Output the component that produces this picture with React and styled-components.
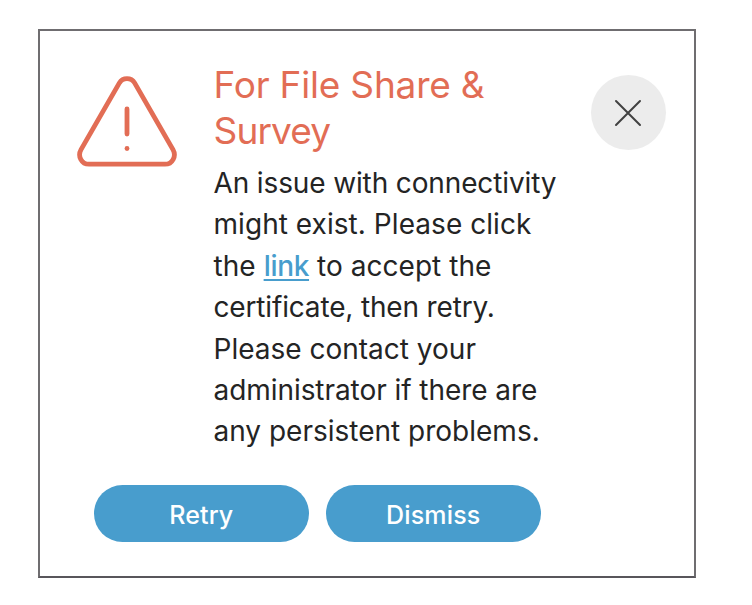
import React from 'react';
import styled, { createGlobalStyle } from 'styled-components';

const GlobalStyle = createGlobalStyle`
  body {
    margin: 0;
    background: #fff;
    font-family: Inter, 'Liberation Sans', sans-serif;
  }
`;

const Dialog = styled.section`
  box-sizing: border-box;
  width: 658px;
  height: 549px;
  margin: 29px 0 0 38px;
  padding: 31px 29px 0 37px;
  border: 2px solid #6f6d70;
  border-bottom-color: #58565b;
  background: #fff;
`;

const Content = styled.div`
  display: flex;
  align-items: flex-start;
`;

const WarningIcon = styled.svg`
  flex: none;
  width: 100px;
  height: 92px;
  margin-top: 13.5px;
  fill: none;
  stroke: #e26d55;
  stroke-width: 4.8;
  stroke-linecap: round;
`;

const Message = styled.div`
  flex: none;
  width: 377px;
  margin-left: 36.5px;
`;

const Title = styled.h1`
  margin: 0;
  color: #e26d55;
  font-size: 37px;
  font-weight: 400;
  line-height: 46px;
`;

const Text = styled.p`
  margin: 9px 0 0;
  color: #242424;
  font-size: 28px;
  line-height: 41.4px;
`;

const Line = styled.span`
  display: block;
  white-space: nowrap;
  letter-spacing: ${({ $spacing }) => $spacing || 0}px;
`;

const Link = styled.a`
  color: #489dcd;
  font-weight: 500;
  letter-spacing: -0.3px;
  text-decoration: underline;
  text-decoration-thickness: 2px;
  text-underline-offset: 3px;
`;

const CloseButton = styled.button`
  display: flex;
  flex: none;
  align-items: center;
  justify-content: center;
  width: 75px;
  height: 75px;
  margin-top: 13px;
  padding: 0;
  border: 0;
  border-radius: 50%;
  background: #ececec;
`;

const CloseIcon = styled.svg`
  width: 28px;
  height: 28px;
  fill: none;
  stroke: #414141;
  stroke-width: 2;
  stroke-linecap: round;
`;

const Actions = styled.div`
  display: flex;
  gap: 16.5px;
  margin: 32.4px 0 0 16.5px;
`;

const Button = styled.button`
  box-sizing: border-box;
  width: 215.5px;
  height: 57px;
  padding: 2px 0 0;
  border: 0;
  border-radius: 29px;
  background: #489dcd;
  color: #fff;
  font: 500 25px Inter, 'Liberation Sans', sans-serif;
  letter-spacing: 0.15px;
`;

const App = () => (
  <>
    <GlobalStyle />
    <Dialog role="alertdialog">
      <Content>
        <WarningIcon viewBox="0 0 100 92">
          <path d="M42.4 6.9 4 73.6C.4 80 4.4 88.2 12 88.2H88C95.6 88.2 99.6 80 96 73.6L57.6 6.9C54.2 1.2 45.8 1.2 42.4 6.9Z" />
          <path d="M50 33V58" />
          <path d="M50 72.5h.01" />
        </WarningIcon>
        <Message>
          <Title>
            <Line $spacing={-0.2}>For File Share &amp;</Line>
            <Line $spacing={-0.85}>Survey</Line>
          </Title>
          <Text>
            <Line $spacing={-0.13}>An issue with connectivity</Line>
            <Line $spacing={0.05}>might exist. Please click</Line>
            <Line $spacing={0.05}>the <Link href="#">link</Link> to accept the</Line>
            <Line $spacing={-0.16}>certificate, then retry.</Line>
            <Line>Please contact your</Line>
            <Line $spacing={-0.06}>administrator if there are</Line>
            <Line>any persistent problems.</Line>
          </Text>
        </Message>
        <CloseButton aria-label="Close">
          <CloseIcon viewBox="0 0 28 28">
            <path d="M2 2 26 26M26 2 2 26" />
          </CloseIcon>
        </CloseButton>
      </Content>
      <Actions>
        <Button>Retry</Button>
        <Button>Dismiss</Button>
      </Actions>
    </Dialog>
  </>
);

export default App;
